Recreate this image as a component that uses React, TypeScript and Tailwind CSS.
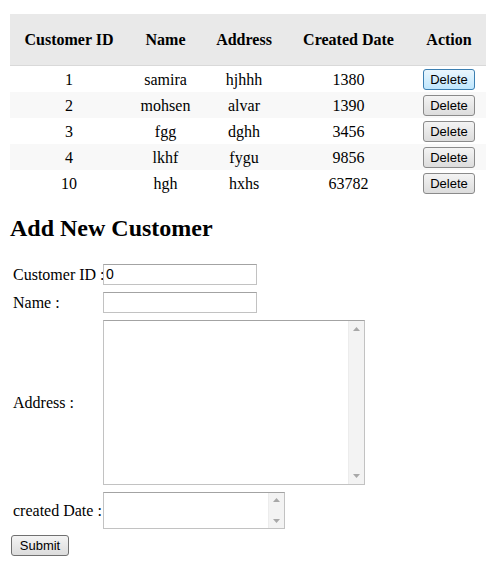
const customers = [
  { id: 1, name: 'samira', address: 'hjhhh', created: '1380' },
  { id: 2, name: 'mohsen', address: 'alvar', created: '1390' },
  { id: 3, name: 'fgg', address: 'dghh', created: '3456' },
  { id: 4, name: 'lkhf', address: 'fygu', created: '9856' },
  { id: 10, name: 'hgh', address: 'hxhs', created: '63782' },
]

function ScrollStrip({ className }: { className: string }) {
  return (
    <div className={`flex w-[16px] flex-col items-center justify-between border-l border-[#ececec] bg-[#f3f3f3] py-[6px] ${className}`}>
      <svg width="7" height="4" viewBox="0 0 7 4">
        <path d="M0 4 L3.5 0 L7 4 Z" fill="#a8a8a8" />
      </svg>
      <svg width="7" height="4" viewBox="0 0 7 4">
        <path d="M0 0 L3.5 4 L7 0 Z" fill="#a8a8a8" />
      </svg>
    </div>
  )
}

export default function App() {
  return (
    <div className="min-h-[573px] bg-white pl-[10px] pt-[14px] font-['Liberation_Serif',serif] text-[16px] text-black">
      <table className="w-[476px] table-fixed border-collapse">
        <colgroup>
          <col className="w-[118px]" />
          <col className="w-[75px]" />
          <col className="w-[82px]" />
          <col className="w-[127px]" />
          <col className="w-[74px]" />
        </colgroup>
        <thead>
          <tr className="h-[51px] border-b border-[#d9d9d9] bg-[#e9e9e9]">
            <th className="pt-[2px] font-bold">Customer ID</th>
            <th className="pt-[2px] font-bold">Name</th>
            <th className="pt-[2px] font-bold">Address</th>
            <th className="pt-[2px] font-bold">Created Date</th>
            <th className="pt-[2px] font-bold">Action</th>
          </tr>
        </thead>
        <tbody>
          {customers.map((c, i) => (
            <tr key={c.id} className={`h-[26px] ${i % 2 === 1 ? 'bg-[#f8f8f8]' : 'bg-white'}`}>
              <td className="pt-[2px] text-center">{c.id}</td>
              <td className="pt-[2px] text-center">{c.name}</td>
              <td className="pt-[2px] text-center">{c.address}</td>
              <td className="pt-[2px] text-center">{c.created}</td>
              <td className="text-center">
                <button
                  className={`h-[21px] w-[52px] rounded-[3px] border font-['Liberation_Sans',sans-serif] text-[13px] leading-none ${
                    i === 0
                      ? 'border-[#3c7fb1] bg-gradient-to-b from-[#eaf6fd] to-[#bee6fd]'
                      : 'border-[#8a8a8a] bg-gradient-to-b from-[#f4f4f4] to-[#dcdcdc]'
                  }`}
                >
                  Delete
                </button>
              </td>
            </tr>
          ))}
        </tbody>
      </table>

      <h2 className="mt-[18px] text-[24px] font-bold leading-[28px]">Add New Customer</h2>

      <div className="mt-[22px] grid grid-cols-[90px_auto] items-center gap-y-[7px] pl-[3px] leading-[21px]">
        <label className="whitespace-nowrap">Customer ID :</label>
        <input
          defaultValue="0"
          className="h-[21px] w-[154px] border border-[#c2c2c2] border-t-[#a3a3a3] px-[2px] font-['Liberation_Sans',sans-serif] text-[14px] outline-none"
        />

        <label className="whitespace-nowrap">Name :</label>
        <input className="h-[21px] w-[154px] border border-[#c2c2c2] border-t-[#a3a3a3] px-[2px] font-['Liberation_Sans',sans-serif] text-[14px] outline-none" />

        <label className="whitespace-nowrap">Address :</label>
        <div className="flex h-[165px] w-[262px] border border-[#c2c2c2] border-t-[#a3a3a3]">
          <textarea className="flex-1 resize-none overflow-hidden outline-none" />
          <ScrollStrip className="" />
        </div>

        <label className="whitespace-nowrap">created Date :</label>
        <div className="flex h-[37px] w-[182px] border border-[#c2c2c2] border-t-[#a3a3a3]">
          <textarea className="flex-1 resize-none overflow-hidden outline-none" />
          <ScrollStrip className="!py-[5px]" />
        </div>
      </div>

      <button className="ml-[1px] mt-[6px] h-[21px] w-[58px] rounded-[3px] border border-[#707070] bg-gradient-to-b from-[#f4f4f4] to-[#dcdcdc] font-['Liberation_Sans',sans-serif] text-[13px] leading-none">
        Submit
      </button>
    </div>
  )
}
